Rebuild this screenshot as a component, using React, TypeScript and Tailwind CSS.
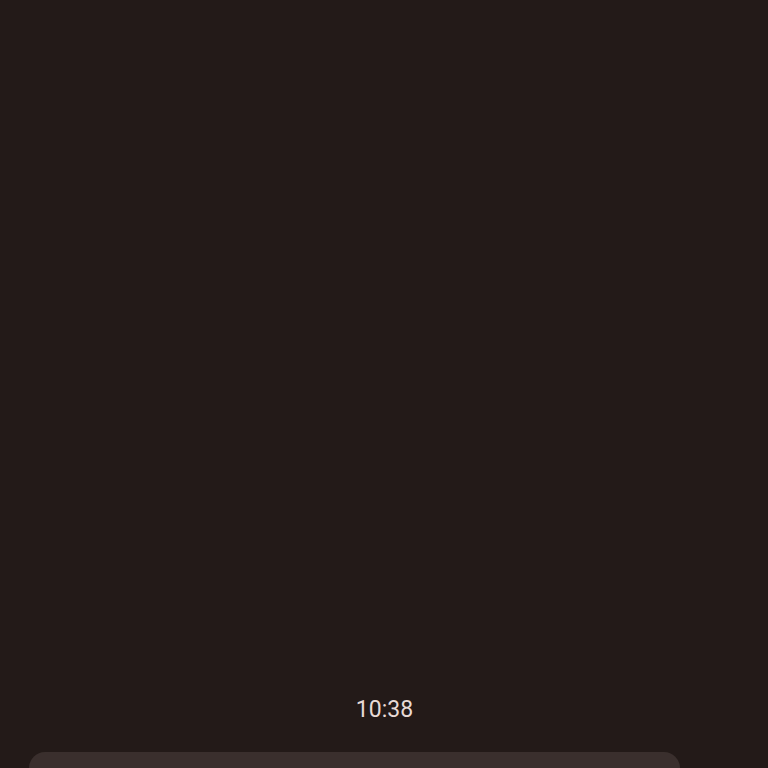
export default function App() {
  return (
    <div className="h-[768px] w-full overflow-hidden bg-[#231a18] flex flex-col justify-end" style={{ fontFamily: "Roboto, 'Noto Sans', sans-serif" }}>
      <p className="text-center text-[23px] leading-[26px] text-[#e8dad6] mb-[29px] pl-[1px]">10:38</p>
      <div className="ml-[29px] w-[651px] h-[16px] rounded-t-[30px] bg-[#3a2f2d]" />
    </div>
  );
}
